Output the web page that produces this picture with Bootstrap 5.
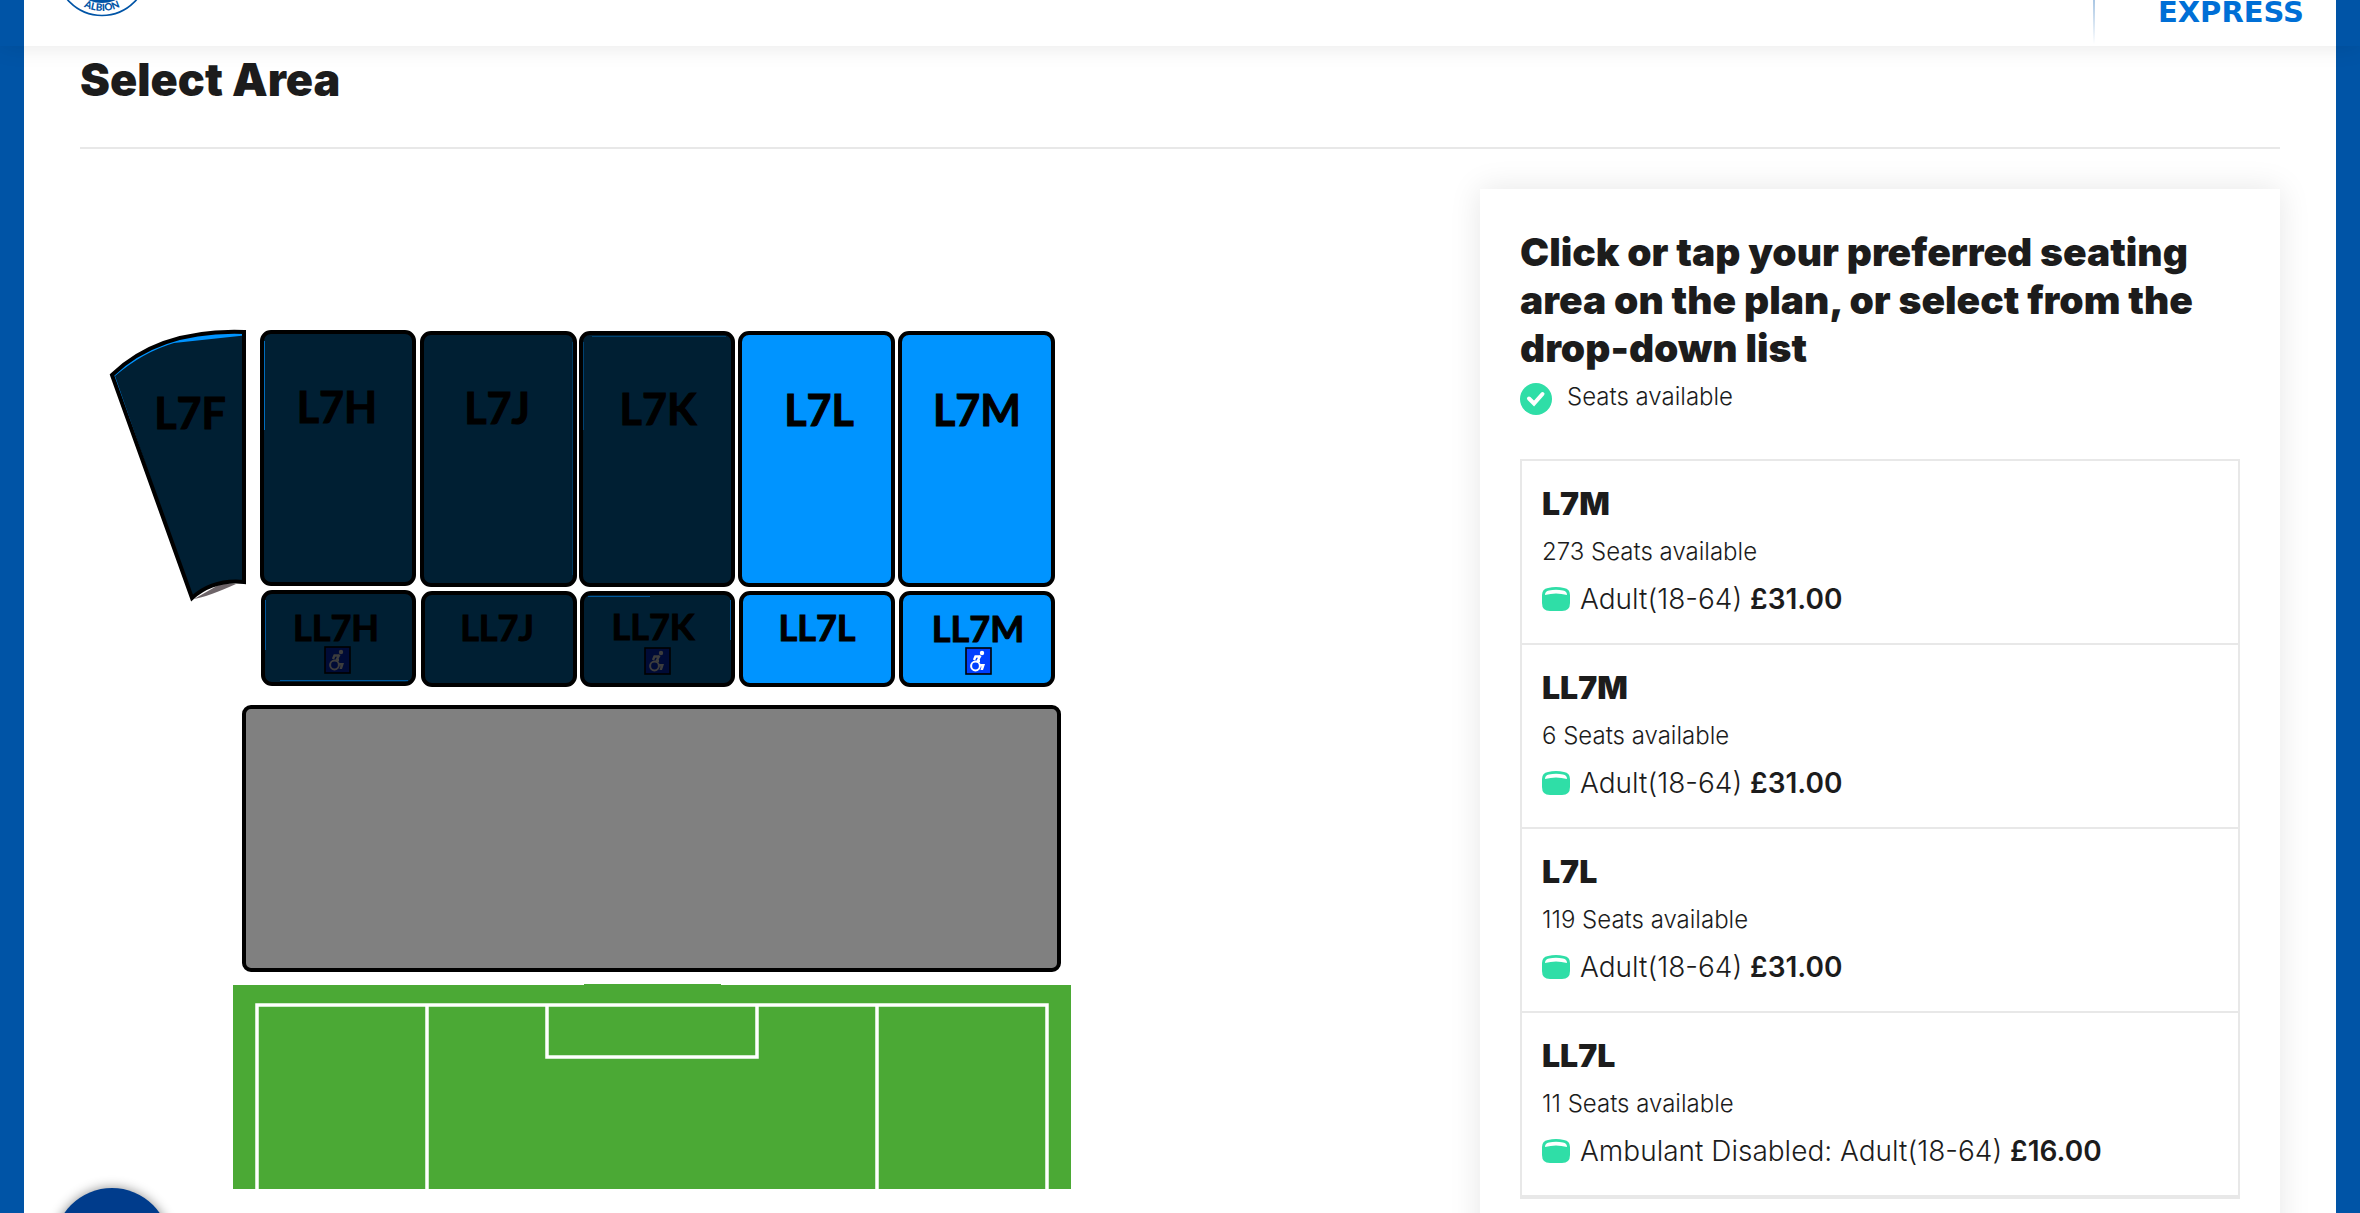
<!DOCTYPE html>
<html lang="en">
<head>
<meta charset="utf-8">
<meta name="viewport" content="width=device-width, initial-scale=1">
<title>Select Area</title>
<link href="https://cdn.jsdelivr.net/npm/bootstrap@5.3.0/dist/css/bootstrap.min.css" rel="stylesheet">
<style>
  body { font-family: Inter, "Liberation Sans", sans-serif; color: #1c1c1c; background: #0054a6; font-weight: 300; }
  .club-frame { background: #fff; margin: 0 24px; }
  .site-top { height: 46px; box-shadow: 0 0 24px rgba(0,0,0,.1); z-index: 3; }
  .site-top-inner { margin: 0 24px; padding: 0 32px; background: #fff; }
  .crest { width: 92px; height: 46px; }
  .crest text { font: 900 10px Lato, sans-serif; fill: #0054a6; }
  .top-rule { width: 2px; height: 44px; margin-right: 63px; background: linear-gradient(#a9c6e3, #fff); }
  .sponsor { font: 700 29px/24px "DejaVu Sans", sans-serif; color: #006fd6; text-decoration: none; }
  .page-pad { padding: 0 56px; }
  .page-title { font-size: 45px; line-height: 68px; font-weight: 900; margin-bottom: 33px; }
  .title-rule { border-top: 2px solid #e8e8e8; opacity: 1; margin: 0 0 40px; }
  .area-panel { flex: 0 0 calc(100% * 4 / 11); padding: 39px 40px 80px; background: #fff; box-shadow: 0 0 30px rgba(0,0,0,.1); }
  .panel-title { font-size: 39px; line-height: 48px; font-weight: 900; margin: 0; }
  .seat-key { font-size: 24px; line-height: 28px; padding-top: 11px; margin-bottom: 44px; gap: 15px; }
  .area-list { border: 2px solid #e8e8e8; border-width: 0 0 2px; border-radius: 0; }
  .area-list .list-group-item { border: 2px solid #e8e8e8; border-bottom-width: 0; border-radius: 0; padding: 20px 20px 22px; color: #1c1c1c; font-weight: 300; }
  .area-list .list-group-item:last-child { border-bottom-width: 2px; }
  .area-list .list-group-item + .list-group-item { border-top-width: 2px; }
  .area-name { font-size: 32px; line-height: 46px; font-weight: 900; }
  .area-count { font-size: 24px; line-height: 50px; }
  .area-price { font-size: 28px; line-height: 44px; gap: 10px; }
  .area-price strong { font-weight: 600; }
  .stand-map text { font-family: Lato, "Liberation Sans", sans-serif; font-weight: 700; text-anchor: middle; fill: #000; stroke: #000; stroke-width: 1; }
  .upper text { font-size: 43px; }
  .lower text { font-size: 36px; }
  .stand-map a { text-decoration: none; }
  .seatblock { stroke: #000; stroke-width: 4; }
  .sold .seatblock { fill: #001f33; }
  .open .seatblock { fill: #0094ff; }
  .open { --sign: #0040ff; --figure: #fff; }
  .sold { --sign: #000b36; --figure: #3d3d3d; }
  .help-fab { left: 54px; bottom: -91px; width: 116px; height: 116px; border: 0; background: #003c8c; box-shadow: 0 0 12px rgba(0,0,0,.45); z-index: 4; }
</style>
<script src="https://cdn.jsdelivr.net/npm/bootstrap@5.3.0/dist/js/bootstrap.bundle.min.js"></script>
</head>
<body class="vh-100 overflow-hidden">
<header class="site-top position-relative">
  <div class="site-top-inner d-flex h-100 align-items-start">
    <a href="#" aria-label="Albion home" class="me-auto">
      <svg class="crest d-block" viewBox="0 0 92 46">
        <circle cx="46" cy="-30" r="45.500" fill="#fff" stroke="#0054a6" stroke-width="1.600"/>
        <circle cx="46" cy="-30" r="33" fill="#0054a6"/>
        <path id="crestArc" d="M5 -30 A41 41 0 0 0 87 -30" fill="none"/>
        <text text-anchor="middle"><textPath href="#crestArc" startOffset="50%">ALBION</textPath></text>
      </svg>
    </a>
    <div class="top-rule"></div>
    <a href="#" class="sponsor">EXPRESS</a>
  </div>
</header>
<div class="club-frame min-vh-100">
<main class="page-pad">
  <h1 class="page-title">Select Area</h1>
  <hr class="title-rule">
  <div class="d-flex align-items-start">
    <div class="flex-fill">
      <svg class="stand-map d-block w-100" viewBox="80 189 1400 1000">
        <defs>
          <g id="chairSign">
            <rect x="1" y="1" width="25" height="26" fill="var(--sign)" stroke="#000" stroke-width="1.600"/>
            <circle cx="17" cy="6" r="2.200" fill="var(--figure)"/>
            <path d="M15.500 8.500l-3.500 6.500M14.500 9.500h-4l-1.500 3.500M12 14h3" fill="none" stroke="var(--figure)" stroke-width="2.400"/>
            <path d="M14.500 17h5.500l-2 6h-2.500l1-3.500h-2z" fill="var(--figure)"/>
            <circle cx="10.500" cy="19" r="4.400" fill="none" stroke="var(--figure)" stroke-width="2"/>
          </g>
        </defs>
        <g class="upper sold">
          <path d="M222 583L194 599Q207 597 236 584Z" fill="#6d6468"/>
          <path d="M112 375C142 346 185 330 244 332V582Q213 579 192 598Z" fill="#0094ff"/>
          <path d="M115 376Q143 352 174 343L244 335.500V582Q213 579 192 598Z" fill="#001f33"/>
          <path d="M112 375C142 346 185 330 244 332V582Q213 579 192 598Z" fill="none" stroke="#000" stroke-width="4"/>
          <text x="190" y="429">L7F</text>
          <rect class="seatblock" x="262" y="332" width="152" height="252" rx="9"/>
          <path d="M264.500 341V430" stroke="#006dbd"/>
          <text x="337" y="423">L7H</text>
          <rect class="seatblock" x="422" y="333" width="153" height="252" rx="9"/>
          <path d="M572.500 342V575" stroke="#003a61"/>
          <text x="497" y="424">L7J</text>
          <rect class="seatblock" x="581" y="333" width="152" height="252" rx="9"/>
          <path d="M583.500 430V342M592 336.500H726" fill="none" stroke="#004170"/>
          <text x="658" y="425">L7K</text>
        </g>
        <g class="upper open">
          <a href="#"><rect class="seatblock" x="740" y="333" width="153" height="252" rx="9"/><text x="819" y="426">L7L</text></a>
          <a href="#"><rect class="seatblock" x="900" y="333" width="153" height="252" rx="9"/><text x="977" y="426">L7M</text></a>
        </g>
        <g class="lower sold">
          <rect class="seatblock" x="263" y="592" width="151" height="92" rx="9"/>
          <path d="M265.500 600V650M280 680.500H408" stroke="#00569a" fill="none"/>
          <text x="336" y="641">LL7H</text>
          <use href="#chairSign" x="324" y="646"/>
          <rect class="seatblock" x="423" y="593" width="152" height="92" rx="9"/>
          <text x="497" y="641">LL7J</text>
          <rect class="seatblock" x="582" y="593" width="151" height="92" rx="9"/>
          <path d="M588 596.500H650M730.500 600V640" stroke="#00569a" fill="none"/>
          <text x="653" y="640">LL7K</text>
          <use href="#chairSign" x="644" y="647"/>
        </g>
        <g class="lower open">
          <a href="#"><rect class="seatblock" x="741" y="593" width="152" height="92" rx="9"/><text x="817" y="641">LL7L</text></a>
          <a href="#"><rect class="seatblock" x="901" y="593" width="152" height="92" rx="9"/><text x="978" y="642">LL7M</text><use href="#chairSign" x="965" y="647"/></a>
        </g>
        <rect x="244" y="707" width="815" height="263" rx="7" fill="#808080" stroke="#000" stroke-width="4"/>
        <path d="M233 985H584V984H721V985H1071V1189H233Z" fill="#4ba935"/>
        <path d="M257 1189V1005H1047V1189M427 1005V1189M877 1005V1189M547 1005V1057H757V1005" fill="none" stroke="#fff" stroke-width="3.500"/>
      </svg>
    </div>
    <section class="area-panel">
      <h2 class="panel-title">Click or tap your preferred seating area on the plan, or select from the drop-down list</h2>
      <div class="seat-key d-flex align-items-start">
        <svg width="32" height="32" viewBox="0 0 32 32" aria-hidden="true"><circle cx="16" cy="16" r="16" fill="#2fdea7"/><path d="M9 15.500l5 5L22.500 11" fill="none" stroke="#fff" stroke-width="4" stroke-linecap="round"/></svg>
        <span>Seats available</span>
      </div>
      <svg class="d-none"><symbol id="seatIcon" viewBox="0 0 28 24"><path d="M6 1Q14-1 22 1Q28 2 28 8V16Q28 24 20 24H8Q0 24 0 16V8Q0 2 6 1Z" fill="#2fdea7"/><path d="M3 8Q3 4 7 3.500Q14 2 21 3.500Q25 4 25 8Q14 5 3 8Z" fill="#fff"/></symbol></svg>
      <div class="list-group area-list">
        <button type="button" class="list-group-item list-group-item-action">
          <div class="area-name">L7M</div><div class="area-count">273 Seats available</div>
          <div class="area-price d-flex align-items-center"><svg width="28" height="24"><use href="#seatIcon"/></svg><span>Adult(18-64) <strong>£31.00</strong></span></div>
        </button>
        <button type="button" class="list-group-item list-group-item-action">
          <div class="area-name">LL7M</div><div class="area-count">6 Seats available</div>
          <div class="area-price d-flex align-items-center"><svg width="28" height="24"><use href="#seatIcon"/></svg><span>Adult(18-64) <strong>£31.00</strong></span></div>
        </button>
        <button type="button" class="list-group-item list-group-item-action">
          <div class="area-name">L7L</div><div class="area-count">119 Seats available</div>
          <div class="area-price d-flex align-items-center"><svg width="28" height="24"><use href="#seatIcon"/></svg><span>Adult(18-64) <strong>£31.00</strong></span></div>
        </button>
        <button type="button" class="list-group-item list-group-item-action">
          <div class="area-name">LL7L</div><div class="area-count">11 Seats available</div>
          <div class="area-price d-flex align-items-center"><svg width="28" height="24"><use href="#seatIcon"/></svg><span>Ambulant Disabled: Adult(18-64) <strong>£16.00</strong></span></div>
        </button>
      </div>
    </section>
  </div>
</main>
</div>
<button type="button" class="help-fab position-fixed rounded-circle" aria-label="Help"></button>
</body>
</html>
